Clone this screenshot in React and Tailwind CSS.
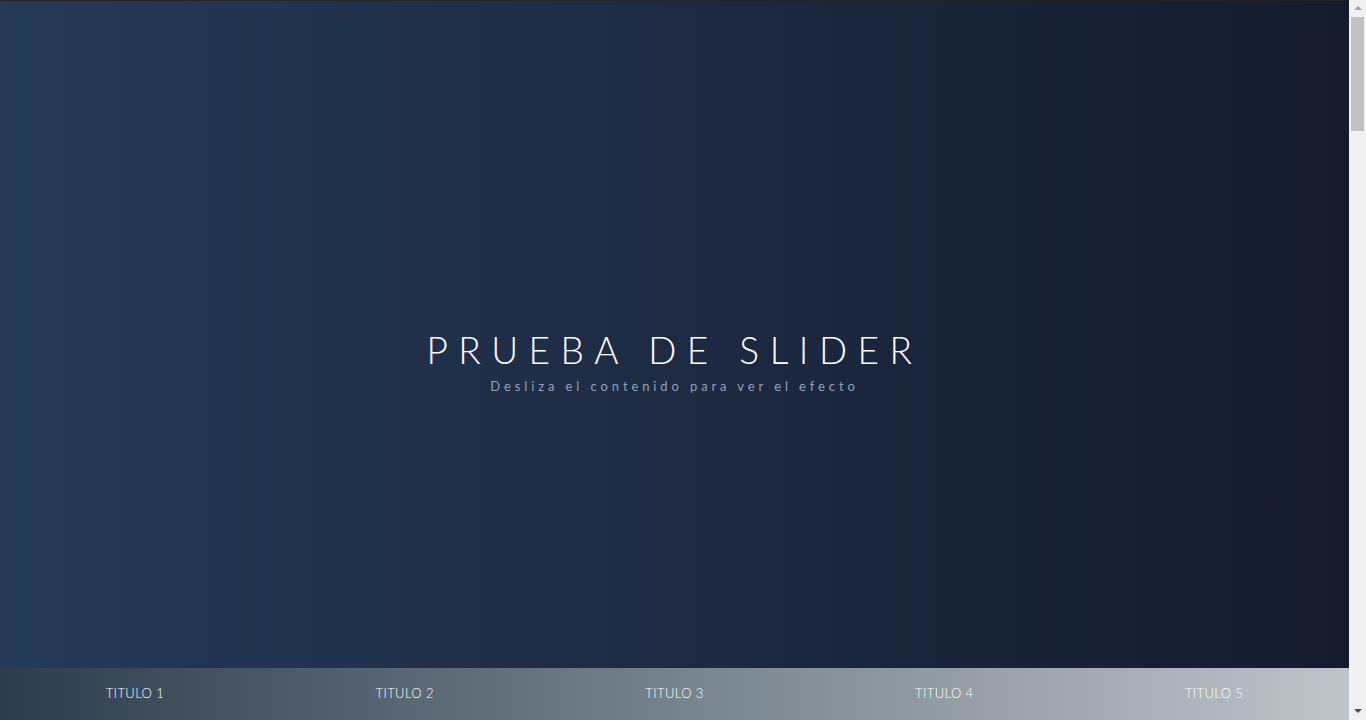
export default function App() {
  const titles = ['Titulo 1', 'Titulo 2', 'Titulo 3', 'Titulo 4', 'Titulo 5']

  return (
    <div className="h-[720px] flex overflow-hidden font-['Lato','Liberation_Sans',sans-serif] bg-[#151b2c]">
      <main className="flex-1 flex flex-col min-w-0">
        <div className="h-px bg-[#232426]" />
        {/* hero */}
        <section className="h-[667px] flex flex-col items-center justify-center pt-[58px] bg-[linear-gradient(to_right,#253a56,#1d2a42_50%,#141b2d)]">
          <h1 className="text-white text-[37px] font-light tracking-[10.5px] leading-none">
            PRUEBA DE SLIDER
          </h1>
          <p className="mt-[9px] text-[13px] tracking-[3.9px] text-[#8ea4bc]">
            Desliza el contenido para ver el efecto
          </p>
        </section>

        {/* nav */}
        <nav className="h-[52px] shrink-0 grid grid-cols-5 bg-[linear-gradient(to_right,#2d3c4d,#76828c_50%,#bfc4c8)]">
          {titles.map((t) => (
            <a key={t} href="#" className="flex items-center justify-center text-white text-[13px] font-light uppercase tracking-[0.03em]">
              {t}
            </a>
          ))}
        </nav>
      </main>

      {/* scrollbar */}
      <div className="w-[17px] shrink-0 flex flex-col bg-[#f1f1f1]">
        <div className="h-[17px] flex items-center justify-center">
          <svg width="8" height="5" viewBox="0 0 8 5"><path d="M4 0L8 4H0Z" fill="#a3a3a3" /></svg>
        </div>
        <div className="flex-1 px-[2px]">
          <div className="h-[114px] bg-[#c1c1c1]" />
        </div>
        <div className="h-[17px] flex items-center justify-center">
          <svg width="8" height="5" viewBox="0 0 8 5"><path d="M0 0H8L4 4Z" fill="#505050" /></svg>
        </div>
      </div>
    </div>
  )
}
